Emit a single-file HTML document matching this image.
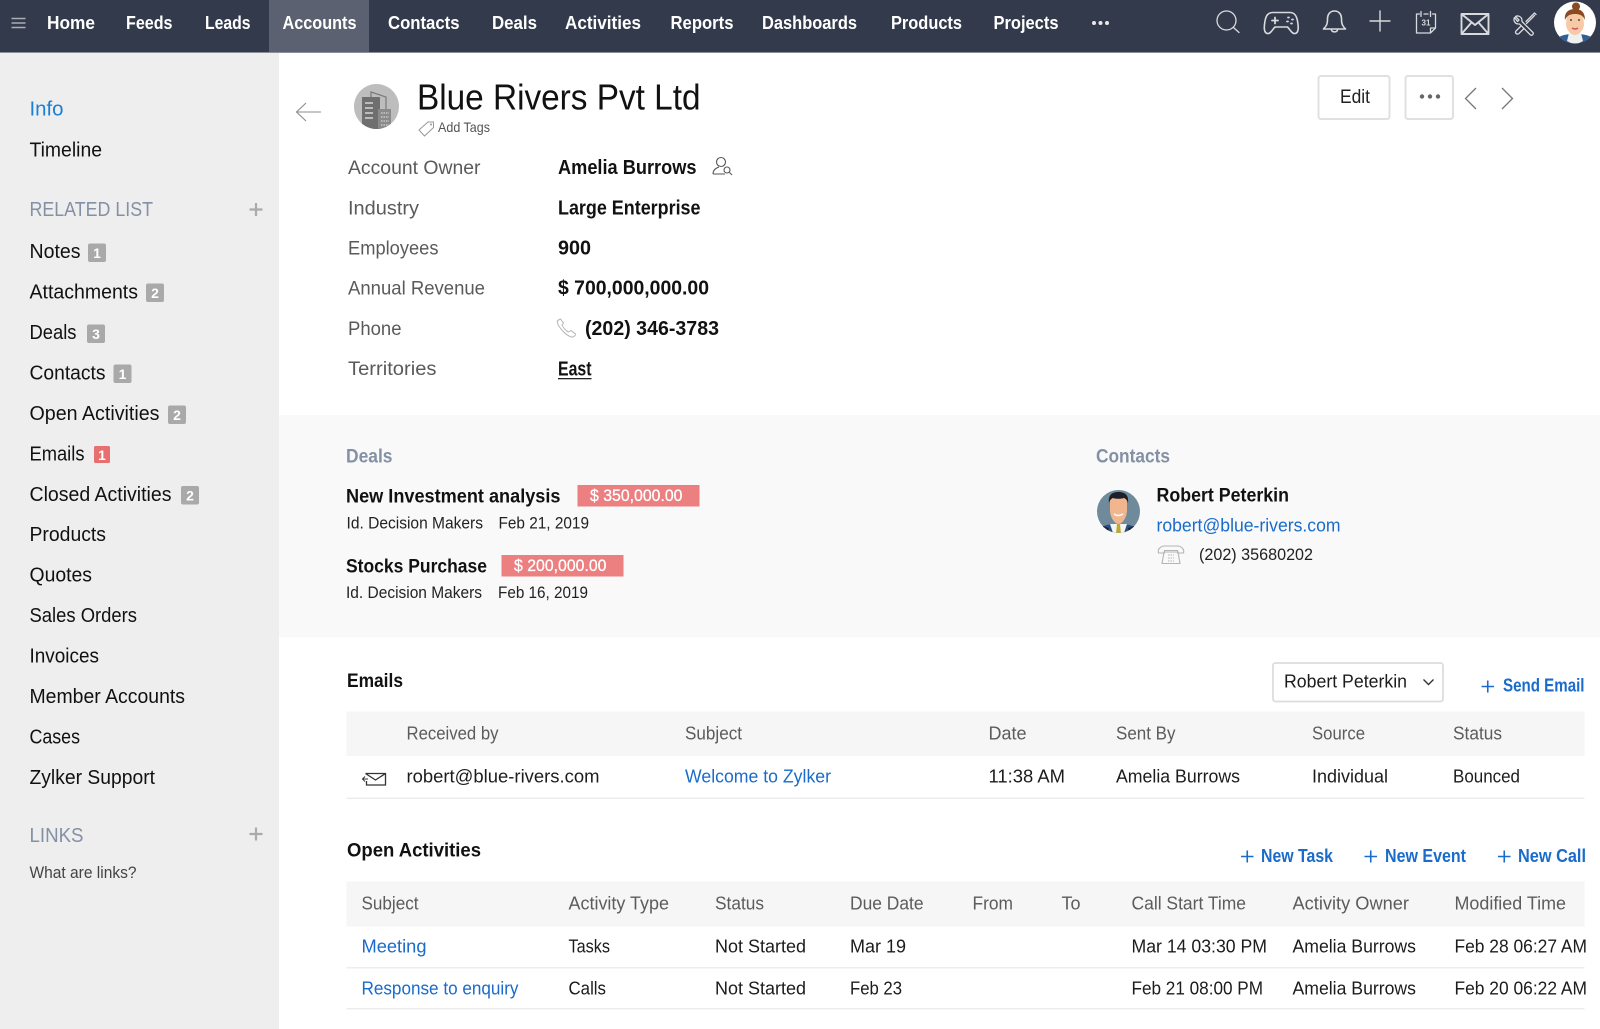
<!DOCTYPE html>
<html lang="en">
<head>
<meta charset="utf-8">
<title>Blue Rivers Pvt Ltd</title>
<style>
html,body{margin:0;padding:0;background:#fff;width:1600px;height:1029px;overflow:hidden}
svg{display:block}
text{font-family:"Liberation Sans",sans-serif;white-space:pre}
.n{font-size:18px;font-weight:700;fill:#fff}
.s{font-size:20px;fill:#111}
.sh{font-size:20px;fill:#8490a3}
.l{font-size:19.5px;fill:#5a5a5a}
.v{font-size:20px;font-weight:700;fill:#111}
.d{font-size:17px;fill:#222}
.h{font-size:18.5px;fill:#5c5c5c}
.c{font-size:18.5px;fill:#1c1c1c}
.b{font-size:18.5px;fill:#1a6bcb}
.t{font-size:19.5px;font-weight:700;fill:#111}
.lk{font-size:18px;font-weight:700;fill:#1a6bcb}
.g{font-size:19.5px;font-weight:700;fill:#8490a3}
.bd{font-size:14px;font-weight:700;fill:#fff;text-anchor:middle}
.ic{fill:none;stroke:#d9dadd;stroke-width:1.6;stroke-linecap:round;stroke-linejoin:round}
</style>
</head>
<body>
<svg width="1600" height="1029" viewBox="0 0 1600 1029" xmlns="http://www.w3.org/2000/svg">
<!-- nav -->
<rect x="0" y="0" width="1600" height="52" fill="#323a4b"/>
<rect x="0" y="52" width="1600" height="1" fill="#8a8f9b"/>
<rect x="269" y="0" width="100" height="52" fill="#5b6170"/>
<g stroke="#a9adb5" stroke-width="1.6"><path d="M11.5 18.5H25.5M11.5 23H25.5M11.5 27.5H25.5"/></g>
<text class="n" x="47" y="29" textLength="48" lengthAdjust="spacingAndGlyphs">Home</text>
<text class="n" x="126" y="29" textLength="46.5" lengthAdjust="spacingAndGlyphs">Feeds</text>
<text class="n" x="205" y="29" textLength="45.5" lengthAdjust="spacingAndGlyphs">Leads</text>
<text class="n" x="282.5" y="29" textLength="74" lengthAdjust="spacingAndGlyphs">Accounts</text>
<text class="n" x="388" y="29" textLength="71.5" lengthAdjust="spacingAndGlyphs">Contacts</text>
<text class="n" x="492" y="29" textLength="45" lengthAdjust="spacingAndGlyphs">Deals</text>
<text class="n" x="565" y="29" textLength="76" lengthAdjust="spacingAndGlyphs">Activities</text>
<text class="n" x="670.5" y="29" textLength="63" lengthAdjust="spacingAndGlyphs">Reports</text>
<text class="n" x="762" y="29" textLength="95" lengthAdjust="spacingAndGlyphs">Dashboards</text>
<text class="n" x="891" y="29" textLength="71" lengthAdjust="spacingAndGlyphs">Products</text>
<text class="n" x="993.5" y="29" textLength="65" lengthAdjust="spacingAndGlyphs">Projects</text>
<g fill="#e8e9eb"><circle cx="1094" cy="23" r="2"/><circle cx="1100.5" cy="23" r="2"/><circle cx="1107" cy="23" r="2"/></g>
<!-- nav icons -->
<g class="ic">
<circle cx="1226.5" cy="20.5" r="9.5" stroke-width="1.3"/><path d="M1233.5 27.5L1239 32.5" stroke-width="1.3"/>
<path d="M1273 12.5h17c4.5 0 6.500 3 7.500 8.500c1 5.500 1.500 12 -2.500 12.500c-3 .5 -5 -4 -7.500 -6.500h-12.500c-2.500 2.500 -4.500 7 -7.500 6.500c-4 -.5 -3.500 -7 -2.500 -12.500c1 -5.500 3 -8.500 8 -8.500z"/>
<path d="M1272 20.500h6M1275 17.500v6" stroke-width="1.800"/>
<path d="M1288 17.500h1M1292 19.500h1M1287 21.500h1M1291 23.500h1" stroke-width="1.800"/>
<path d="M1334.500 11c-5 0 -7 4 -7 8c0 5 -1 7 -4 10h22c-3 -3 -4 -5 -4 -10c0 -4 -2 -8 -7 -8z"/><path d="M1331.500 30c.5 2.500 5.500 2.500 6 0"/>
<path d="M1370 21H1390M1380 11V31" stroke-width="1.400"/>
<path d="M1416.500 14h3M1424 14h4M1432.500 14h3v14l-5 5h-14v-19M1435.500 28h-5v5" stroke-width="1.300"/><path d="M1421 11.500v5M1430.500 11.500v5" stroke-width="1.300"/>
<path d="M1461.500 14h27v20h-27zM1461.500 14l13.500 11l13.500 -11M1461.500 34l10 -11.500M1488.500 34l-10 -11.500" stroke-width="1.900"/>
<path d="M1514.500 17.500c-1.500 3 .5 6.500 4 6.500l1 0l11 11c1.500 1 3.500 -1 2.500 -2.500l-11 -11l0 -1c0 -3.500 -3.500 -5.500 -6.500 -4l3.500 3.500l-1.500 1.500z" stroke-width="1.300"/>
<path d="M1536 14.500l-1.500 -1.500l-8.500 8.500M1534.500 15.500l-8 8M1521 26l-5 5c-1.500 2 1 4 3 2.500l5 -5" stroke-width="1.300"/>
</g>
<text x="1421.500" y="25.500" font-size="8.500" font-weight="700" fill="#d9dadd" textLength="9" lengthAdjust="spacingAndGlyphs">31</text>
<!-- user avatar -->
<defs><clipPath id="ua"><circle cx="1575" cy="22.500" r="21"/></clipPath><clipPath id="ca"><circle cx="1118.500" cy="511.500" r="21.500"/></clipPath><clipPath id="ba"><circle cx="376.500" cy="106.500" r="22.500"/></clipPath></defs>
<circle cx="1575" cy="22.500" r="21" fill="#fff"/>
<g clip-path="url(#ua)">
<path d="M1554 44c2 -8 10 -10 21 -10s19 2 21 10z" fill="#2f5f94"/>
<path d="M1569 33h12l2 8l-8 4l-8 -4z" fill="#eef0f2"/>
<path d="M1567 15c2 -4 14 -4 16 0l1 9c0 6 -5 11 -9 11s-9 -5 -9 -11z" fill="#f7c9a5"/>
<circle cx="1576" cy="6.500" r="4" fill="#8a4a22"/>
<path d="M1565 20c-1 -8 4 -11 10 -11s10 3 10 11c-2 -5 -6 -6 -10 -6s-8 1 -10 6z" fill="#8a4a22"/>
<path d="M1572 28q3 2 6 0" stroke="#c9566a" stroke-width="1.500" fill="none"/>
<path d="M1570 20h2M1578 20h2" stroke="#333" stroke-width="1.200"/>
</g>
<!-- sidebar -->
<rect x="0" y="53" width="279" height="976" fill="#eeeeee"/>
<text x="29.500" y="115.500" font-size="20" fill="#1b7fd4" textLength="34" lengthAdjust="spacingAndGlyphs">Info</text>
<text class="s" x="29.500" y="156.500" textLength="72.500" lengthAdjust="spacingAndGlyphs">Timeline</text>
<text class="sh" x="29.500" y="216" textLength="123.500" lengthAdjust="spacingAndGlyphs">RELATED LIST</text>
<path d="M249.500 209.500H262.500M256 203V216" stroke="#aaaaaa" stroke-width="2.200"/>
<text class="s" x="29.500" y="258" textLength="51" lengthAdjust="spacingAndGlyphs">Notes</text>
<rect x="88" y="243.500" width="18" height="18.500" rx="2" fill="#a9a9a9"/><text class="bd" x="97" y="258">1</text>
<text class="s" x="29.500" y="298.500" textLength="108.500" lengthAdjust="spacingAndGlyphs">Attachments</text>
<rect x="146" y="283.500" width="18" height="18.500" rx="2" fill="#a9a9a9"/><text class="bd" x="155" y="298">2</text>
<text class="s" x="29.500" y="339" textLength="47" lengthAdjust="spacingAndGlyphs">Deals</text>
<rect x="87" y="324.500" width="18" height="18.500" rx="2" fill="#a9a9a9"/><text class="bd" x="96" y="339">3</text>
<text class="s" x="29.500" y="379.500" textLength="76" lengthAdjust="spacingAndGlyphs">Contacts</text>
<rect x="113.500" y="364.500" width="18" height="18.500" rx="2" fill="#a9a9a9"/><text class="bd" x="122.500" y="379">1</text>
<text class="s" x="29.500" y="420" textLength="130" lengthAdjust="spacingAndGlyphs">Open Activities</text>
<rect x="168" y="405.500" width="18" height="18.500" rx="2" fill="#a9a9a9"/><text class="bd" x="177" y="420">2</text>
<text class="s" x="29.500" y="460.500" textLength="55" lengthAdjust="spacingAndGlyphs">Emails</text>
<rect x="94" y="446" width="16" height="17" rx="1.500" fill="#e86f6f"/><text class="bd" x="102" y="460">1</text>
<text class="s" x="29.500" y="501" textLength="142" lengthAdjust="spacingAndGlyphs">Closed Activities</text>
<rect x="181" y="486" width="18" height="18.500" rx="2" fill="#a9a9a9"/><text class="bd" x="190" y="500.500">2</text>
<text class="s" x="29.500" y="541" textLength="76.500" lengthAdjust="spacingAndGlyphs">Products</text>
<text class="s" x="29.500" y="581.500" textLength="62.500" lengthAdjust="spacingAndGlyphs">Quotes</text>
<text class="s" x="29.500" y="622" textLength="107.500" lengthAdjust="spacingAndGlyphs">Sales Orders</text>
<text class="s" x="29.500" y="662.500" textLength="69.500" lengthAdjust="spacingAndGlyphs">Invoices</text>
<text class="s" x="29.500" y="703" textLength="155.500" lengthAdjust="spacingAndGlyphs">Member Accounts</text>
<text class="s" x="29.500" y="743.500" textLength="50.500" lengthAdjust="spacingAndGlyphs">Cases</text>
<text class="s" x="29.500" y="784" textLength="125.500" lengthAdjust="spacingAndGlyphs">Zylker Support</text>
<text class="sh" x="29.500" y="842" textLength="54" lengthAdjust="spacingAndGlyphs">LINKS</text>
<path d="M249.500 834H262.500M256 827.500V840.500" stroke="#aaaaaa" stroke-width="2.200"/>
<text x="29.500" y="878" font-size="16.500" fill="#444" textLength="107" lengthAdjust="spacingAndGlyphs">What are links?</text>
<!-- header -->
<path d="M321 112H297M306 103L296.500 112L306 121" fill="none" stroke="#8c8c8c" stroke-width="1.100"/>
<circle cx="376.500" cy="106.500" r="22.500" fill="#bdbdbd"/>
<g clip-path="url(#ba)">
<path d="M371 92l15 5v32h-15z" fill="none" stroke="#7a7a7a" stroke-width="1.200"/>
<rect x="362" y="97" width="18" height="32" fill="#6f6f6f"/>
<rect x="378" y="109" width="13" height="20" fill="#8a8a8a"/>
<path d="M365 103h8M365 108h8M365 113h8M365 118h8" stroke="#d5d5d5" stroke-width="1.500"/>
<path d="M381 113h8M381 117h8M381 121h8M381 125h8" stroke="#d5d5d5" stroke-width="1.300" stroke-dasharray="1.500 1"/>
</g>
<text x="417" y="109.500" font-size="36" fill="#111" textLength="283.500" lengthAdjust="spacingAndGlyphs">Blue Rivers Pvt Ltd</text>
<path d="M419 130l9 -8h5.500v5.500l-9 8.500z" fill="none" stroke="#999" stroke-width="1"/><circle cx="431" cy="124.500" r="1" fill="#999"/>
<text x="438" y="132" font-size="14" fill="#555" textLength="52" lengthAdjust="spacingAndGlyphs">Add Tags</text>
<rect x="1318.500" y="76" width="71" height="43" rx="2.500" fill="#fff" stroke="#e0e0e0" stroke-width="2"/>
<text x="1340" y="103" font-size="19" fill="#222" textLength="30" lengthAdjust="spacingAndGlyphs">Edit</text>
<rect x="1405.500" y="76" width="47.500" height="43" rx="2.500" fill="#fff" stroke="#e0e0e0" stroke-width="2"/>
<g fill="#666"><circle cx="1422" cy="96.500" r="2.200"/><circle cx="1430" cy="96.500" r="2.200"/><circle cx="1438" cy="96.500" r="2.200"/></g>
<path d="M1476 88L1465.500 98.500L1476 109M1502 88L1512.500 98.500L1502 109" fill="none" stroke="#777" stroke-width="1.300"/>
<!-- fields -->
<text class="l" x="348" y="174" textLength="132.500" lengthAdjust="spacingAndGlyphs">Account Owner</text>
<text class="l" x="348" y="214.500" textLength="71" lengthAdjust="spacingAndGlyphs">Industry</text>
<text class="l" x="348" y="254.500" textLength="90.500" lengthAdjust="spacingAndGlyphs">Employees</text>
<text class="l" x="348" y="294.500" textLength="137" lengthAdjust="spacingAndGlyphs">Annual Revenue</text>
<text class="l" x="348" y="335" textLength="53.500" lengthAdjust="spacingAndGlyphs">Phone</text>
<text class="l" x="348" y="375" textLength="88.500" lengthAdjust="spacingAndGlyphs">Territories</text>
<text class="v" x="558" y="174" textLength="138.500" lengthAdjust="spacingAndGlyphs">Amelia Burrows</text>
<text class="v" x="558" y="214.500" textLength="142.500" lengthAdjust="spacingAndGlyphs">Large Enterprise</text>
<text class="v" x="558" y="254.500" textLength="33" lengthAdjust="spacingAndGlyphs">900</text>
<text class="v" x="558" y="294.500" textLength="151" lengthAdjust="spacingAndGlyphs">$ 700,000,000.00</text>
<text class="v" x="585" y="335" textLength="134" lengthAdjust="spacingAndGlyphs">(202) 346-3783</text>
<text class="v" x="558" y="375.500" textLength="33.500" lengthAdjust="spacingAndGlyphs">East</text>
<rect x="558" y="378" width="33.500" height="1.300" fill="#222"/>
<g fill="none" stroke="#555" stroke-width="1.100"><circle cx="721" cy="162" r="4.500"/><path d="M713 174c0 -4 3 -6 6 -7M713 174h12"/><circle cx="727" cy="170" r="3"/><path d="M729.500 172.500L732 175"/></g>
<path d="M558.500 320c-2 1 -1.500 3.500 1 7c3 4.500 8 9 12 10c2 .5 4 -1.500 4 -3l-4.500 -3.500l-2.500 1.500c-2.500 -1 -5.500 -4.500 -6.500 -7l1.500 -2l-3 -4z" fill="none" stroke="#b5b5b5" stroke-width="1"/>
<!-- deals band -->
<rect x="279" y="415" width="1321" height="222.500" fill="#f9f9f9"/>
<text class="g" x="346" y="462.500" textLength="46.500" lengthAdjust="spacingAndGlyphs">Deals</text>
<text class="t" x="346" y="502.500" textLength="214.500" lengthAdjust="spacingAndGlyphs">New Investment analysis</text>
<rect x="577.500" y="485" width="122" height="21.500" fill="#ec7f80"/>
<text x="590" y="501" font-size="17" fill="#fff" stroke="#fff" stroke-width=".3" textLength="92.500" lengthAdjust="spacingAndGlyphs">$ 350,000.00</text>
<text class="d" x="346.500" y="528.500" textLength="136.500" lengthAdjust="spacingAndGlyphs">Id. Decision Makers</text>
<text class="d" x="498.500" y="528.500" textLength="90.500" lengthAdjust="spacingAndGlyphs">Feb 21, 2019</text>
<text class="t" x="346" y="572.500" textLength="141" lengthAdjust="spacingAndGlyphs">Stocks Purchase</text>
<rect x="501.500" y="555" width="122" height="21.500" fill="#ec7f80"/>
<text x="514" y="571" font-size="17" fill="#fff" stroke="#fff" stroke-width=".3" textLength="92.500" lengthAdjust="spacingAndGlyphs">$ 200,000.00</text>
<text class="d" x="346" y="598" textLength="136" lengthAdjust="spacingAndGlyphs">Id. Decision Makers</text>
<text class="d" x="498" y="598" textLength="90" lengthAdjust="spacingAndGlyphs">Feb 16, 2019</text>
<text class="g" x="1096" y="462.500" textLength="74" lengthAdjust="spacingAndGlyphs">Contacts</text>
<circle cx="1118.500" cy="511.500" r="21.500" fill="#6f8b9b"/>
<g clip-path="url(#ca)">
<path d="M1097 536c2 -10 8 -12 21 -12s20 2 22 12z" fill="#2b4f85"/>
<path d="M1097 536l6 -10l6 2l-2 8zM1140 536l-6 -10l-6 2l2 8z" fill="#20242e"/>
<path d="M1110 524h17l-4 12h-9z" fill="#f4f4f4"/>
<path d="M1117 524h3l1 10h-5z" fill="#b9a832"/>
<path d="M1110 498h17v12c0 8 -5 14 -8.500 14s-8.500 -6 -8.500 -14z" fill="#f2b68f"/>
<path d="M1109 503c-1 -8 3 -11 9.500 -11s10.500 3 9.500 11c-1 -3 -2 -4 -4 -5c-4 1 -8 1 -11 0c-2 1 -3 2 -4 5z" fill="#1c1f2a"/>
<path d="M1114 514q4 3 9 0" stroke="#fff" stroke-width="1.500" fill="none"/>
</g>
<text class="t" x="1156.500" y="501.500" textLength="132.500" lengthAdjust="spacingAndGlyphs">Robert Peterkin</text>
<text class="b" x="1156.500" y="531.500" textLength="184" lengthAdjust="spacingAndGlyphs">robert@blue-rivers.com</text>
<g fill="none" stroke="#b5b5b5" stroke-width="1.100"><path d="M1158.500 553c-1 -3 1 -6 5 -7h15c4 1 6 4 5 7h-6v-2.500h-13v2.500z"/><path d="M1164 552h14l2 11.500h-18z"/><path d="M1168 555h6M1168 558h6M1168 561h6" stroke-dasharray="1.500 1"/></g>
<text class="d" x="1199" y="560" textLength="114" lengthAdjust="spacingAndGlyphs">(202) 35680202</text>
<!-- emails -->
<text class="t" x="347" y="687" textLength="56" lengthAdjust="spacingAndGlyphs">Emails</text>
<rect x="1273" y="663" width="170" height="38.500" rx="2.500" fill="#fff" stroke="#dcdcdc" stroke-width="1.800"/>
<text class="c" x="1284" y="687.500" textLength="123" lengthAdjust="spacingAndGlyphs">Robert Peterkin</text>
<path d="M1423.500 679.500L1428.500 684.500L1433.500 679.500" fill="none" stroke="#333" stroke-width="1.400"/>
<path d="M1481.500 686.500H1494M1487.750 680.500V692.500" stroke="#1a6bcb" stroke-width="1.600"/>
<text class="lk" x="1503" y="691.500" textLength="81.500" lengthAdjust="spacingAndGlyphs">Send Email</text>
<rect x="346.500" y="711.500" width="1238" height="44.500" fill="#f6f6f6"/>
<rect x="346.500" y="797.500" width="1238" height="1.500" fill="#ececec"/>
<text class="h" x="406.500" y="739.500" textLength="92" lengthAdjust="spacingAndGlyphs">Received by</text>
<text class="h" x="685" y="739.500" textLength="57" lengthAdjust="spacingAndGlyphs">Subject</text>
<text class="h" x="988.500" y="739.500" textLength="38" lengthAdjust="spacingAndGlyphs">Date</text>
<text class="h" x="1116" y="739.500" textLength="59.500" lengthAdjust="spacingAndGlyphs">Sent By</text>
<text class="h" x="1312" y="739.500" textLength="53" lengthAdjust="spacingAndGlyphs">Source</text>
<text class="h" x="1453" y="739.500" textLength="49" lengthAdjust="spacingAndGlyphs">Status</text>
<g fill="none" stroke="#333" stroke-width="1.300"><path d="M365.500 773.500h20v11.500h-19v-4M365.500 773.500l10 6.500l10 -6.500"/><path d="M368 779h-5.500M365 776.500l-2.500 2.500l2.500 2.500" stroke-width="1"/></g>
<text class="c" x="406.500" y="782.500" textLength="193" lengthAdjust="spacingAndGlyphs">robert@blue-rivers.com</text>
<text class="b" x="685" y="782.500" textLength="146" lengthAdjust="spacingAndGlyphs">Welcome to Zylker</text>
<text class="c" x="988.500" y="782.500" textLength="76.500" lengthAdjust="spacingAndGlyphs">11:38 AM</text>
<text class="c" x="1116" y="782.500" textLength="124" lengthAdjust="spacingAndGlyphs">Amelia Burrows</text>
<text class="c" x="1312" y="782.500" textLength="76" lengthAdjust="spacingAndGlyphs">Individual</text>
<text class="c" x="1453" y="782.500" textLength="67" lengthAdjust="spacingAndGlyphs">Bounced</text>
<!-- open activities -->
<text class="t" x="347" y="856.500" textLength="134" lengthAdjust="spacingAndGlyphs">Open Activities</text>
<path d="M1241 856.500H1253.500M1247.250 850.500V862.500M1364.500 856.500H1377M1370.750 850.500V862.500M1498 856.500H1510.500M1504.250 850.500V862.500" stroke="#1a6bcb" stroke-width="1.600"/>
<text class="lk" x="1261" y="862" textLength="72" lengthAdjust="spacingAndGlyphs">New Task</text>
<text class="lk" x="1385" y="862" textLength="81" lengthAdjust="spacingAndGlyphs">New Event</text>
<text class="lk" x="1518" y="862" textLength="68" lengthAdjust="spacingAndGlyphs">New Call</text>
<rect x="346.500" y="881.500" width="1238" height="45" fill="#f6f6f6"/>
<rect x="346.500" y="967" width="1238" height="1.500" fill="#ececec"/>
<rect x="346.500" y="1008" width="1238" height="1.500" fill="#ececec"/>
<text class="h" x="361.500" y="909.500" textLength="57" lengthAdjust="spacingAndGlyphs">Subject</text>
<text class="h" x="568.500" y="909.500" textLength="100.500" lengthAdjust="spacingAndGlyphs">Activity Type</text>
<text class="h" x="715" y="909.500" textLength="49" lengthAdjust="spacingAndGlyphs">Status</text>
<text class="h" x="850" y="909.500" textLength="73.500" lengthAdjust="spacingAndGlyphs">Due Date</text>
<text class="h" x="972.500" y="909.500" textLength="40.500" lengthAdjust="spacingAndGlyphs">From</text>
<text class="h" x="1061.500" y="909.500" textLength="19" lengthAdjust="spacingAndGlyphs">To</text>
<text class="h" x="1131.500" y="909.500" textLength="114.500" lengthAdjust="spacingAndGlyphs">Call Start Time</text>
<text class="h" x="1292.500" y="909.500" textLength="116.500" lengthAdjust="spacingAndGlyphs">Activity Owner</text>
<text class="h" x="1454.500" y="909.500" textLength="111.500" lengthAdjust="spacingAndGlyphs">Modified Time</text>
<text class="b" x="361.500" y="952.500" textLength="65" lengthAdjust="spacingAndGlyphs">Meeting</text>
<text class="c" x="568.500" y="952.500" textLength="41.500" lengthAdjust="spacingAndGlyphs">Tasks</text>
<text class="c" x="715" y="952.500" textLength="91" lengthAdjust="spacingAndGlyphs">Not Started</text>
<text class="c" x="850" y="952.500" textLength="56" lengthAdjust="spacingAndGlyphs">Mar 19</text>
<text class="c" x="1131.500" y="952.500" textLength="135.500" lengthAdjust="spacingAndGlyphs">Mar 14 03:30 PM</text>
<text class="c" x="1292.500" y="952.500" textLength="123.500" lengthAdjust="spacingAndGlyphs">Amelia Burrows</text>
<text class="c" x="1454.500" y="952.500" textLength="132.500" lengthAdjust="spacingAndGlyphs">Feb 28 06:27 AM</text>
<text class="b" x="361.500" y="994.500" textLength="157" lengthAdjust="spacingAndGlyphs">Response to enquiry</text>
<text class="c" x="568.500" y="994.500" textLength="37.500" lengthAdjust="spacingAndGlyphs">Calls</text>
<text class="c" x="715" y="994.500" textLength="91" lengthAdjust="spacingAndGlyphs">Not Started</text>
<text class="c" x="850" y="994.500" textLength="52" lengthAdjust="spacingAndGlyphs">Feb 23</text>
<text class="c" x="1131.500" y="994.500" textLength="131.500" lengthAdjust="spacingAndGlyphs">Feb 21 08:00 PM</text>
<text class="c" x="1292.500" y="994.500" textLength="123.500" lengthAdjust="spacingAndGlyphs">Amelia Burrows</text>
<text class="c" x="1454.500" y="994.500" textLength="132.500" lengthAdjust="spacingAndGlyphs">Feb 20 06:22 AM</text>
</svg>
</body>
</html>
